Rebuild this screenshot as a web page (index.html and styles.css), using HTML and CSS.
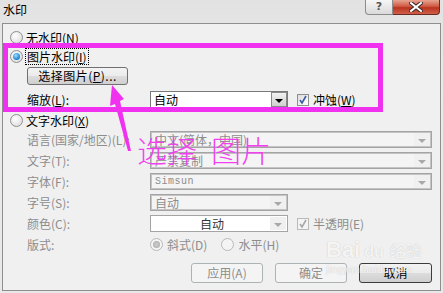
FILE: index.html
```html
<!DOCTYPE html>
<html lang="zh-CN">
<head>
    <meta charset="UTF-8">
    <title>水印</title>
    <link rel="stylesheet" href="styles.css">
</head>
<body>
    <div class="window">
        <div class="titlebar">
            <span class="title">水印</span>
            <div class="caption-btns">
                <div class="cap-help">?</div>
                <div class="cap-close">
                    <svg width="14" height="10" viewBox="0 0 14 10">
                        <path d="M2 1 L12 9 M12 1 L2 9" stroke="#3a2a28" stroke-width="4" stroke-linecap="square"/>
                        <path d="M2 1 L12 9 M12 1 L2 9" stroke="#ffffff" stroke-width="2" stroke-linecap="square"/>
                    </svg>
                </div>
            </div>
        </div>

        <div class="client">
            <div class="radio-row first">
                <span class="radio"></span>
                <span>无水印(<u>N</u>)</span>
            </div>
            <div class="radio-row">
                <span class="radio checked"></span>
                <span class="focus">图片水印(<u>I</u>)</span>
            </div>

            <div class="group">
                <button class="btn pick">选择图片(<u>P</u>)...</button>
                <div class="field-row scale-row">
                    <span class="label">缩放(<u>L</u>):</span>
                    <div class="combo short">
                        <span class="value">自动</span>
                        <span class="drop"><i class="tri"></i></span>
                    </div>
                    <span class="check">
                        <span class="box">
                            <svg width="10" height="10" viewBox="0 0 10 10"><path d="M2 5 L4 8 L8 1" stroke="#3b5aa5" stroke-width="1.6" fill="none"/></svg>
                        </span>
                        <span>冲蚀(<u>W</u>)</span>
                    </span>
                </div>
            </div>

            <div class="radio-row text-radio">
                <span class="radio"></span>
                <span>文字水印(<u>X</u>)</span>
            </div>

            <div class="group text-group">
                <div class="field-row">
                    <span class="label">语言(国家/地区)(L):</span>
                    <div class="combo full off">
                        <span class="value">中文(简体，中国)</span>
                        <span class="drop"><i class="tri"></i></span>
                    </div>
                </div>
                <div class="field-row">
                    <span class="label">文字(T):</span>
                    <div class="combo full off">
                        <span class="value">严禁复制</span>
                        <span class="drop"><i class="tri"></i></span>
                    </div>
                </div>
                <div class="field-row">
                    <span class="label">字体(F):</span>
                    <div class="combo full off">
                        <span class="value mono">Simsun</span>
                        <span class="drop"><i class="tri"></i></span>
                    </div>
                </div>
                <div class="field-row">
                    <span class="label">字号(S):</span>
                    <div class="combo short off">
                        <span class="value">自动</span>
                        <span class="drop"><i class="tri"></i></span>
                    </div>
                </div>
                <div class="field-row">
                    <span class="label">颜色(C):</span>
                    <div class="combo short off color">
                        <span class="value center">自动</span>
                        <span class="drop"><i class="tri"></i></span>
                    </div>
                    <span class="check off">
                        <span class="box">
                            <svg width="10" height="10" viewBox="0 0 10 10"><path d="M2 5 L4 8 L8 1" stroke="#a8a8a8" stroke-width="1.6" fill="none"/></svg>
                        </span>
                        <span>半透明(E)</span>
                    </span>
                </div>
                <div class="field-row">
                    <span class="label">版式:</span>
                    <div class="layout-opts">
                        <span class="opt"><span class="radio off checked"></span>斜式(D)</span>
                        <span class="opt"><span class="radio off"></span>水平(H)</span>
                    </div>
                </div>
            </div>

            <div class="actions">
                <button class="btn off">应用(A)</button>
                <button class="btn off">确定</button>
                <button class="btn default">取消</button>
            </div>
        </div>

        <!-- annotation drawn over the dialog -->
        <div class="mark-box"></div>
        <svg class="mark-arrow" width="443" height="293" viewBox="0 0 443 293">
            <polygon points="112,85 124,99 120,101 131,151 128,151 115,104 110,106" fill="#f032f0"/>
        </svg>
        <div class="mark-text">选择<span class="gap">图片</span></div>

        <div class="watermark">
            <span class="wm-bai">Bai</span><span class="wm-du">du</span><span class="wm-jy">经验</span>
            <span class="wm-url">jingyan.baidu.com</span>
        </div>
    </div>
</body>
</html>
```

FILE: styles.css
```css
body {
    margin: 0;
    background-color: #e8e8e8;
}
.window {
    position: relative;
    width: 443px;
    height: 293px;
    overflow: hidden;
    background: linear-gradient(#e2e2e2, #ebebeb 30%, #e8e8e8);
    font-family: "Noto Sans CJK SC", "Liberation Sans", sans-serif;
    font-size: 12px;
    color: #000;
}
u {
    text-decoration: underline;
    text-underline-offset: 1px;
}
.titlebar {
    height: 23px;
    display: flex;
    justify-content: space-between;
    align-items: flex-start;
}
.title {
    padding: 2px 0 0 3px;
    line-height: 16px;
}
.caption-btns {
    display: flex;
    margin-right: 3px;
}
.cap-help {
    box-sizing: border-box;
    width: 28px;
    height: 15px;
    border: 1px solid #8c8c8c;
    border-top: none;
    border-radius: 0 0 0 4px;
    background: linear-gradient(#f6f6f6, #dadada);
    color: #555;
    font-family: "DejaVu Sans", sans-serif;
    font-size: 11px;
    font-weight: bold;
    line-height: 13px;
    text-align: center;
}
.cap-close {
    box-sizing: border-box;
    width: 47px;
    height: 15px;
    border: 1px solid #6b2a22;
    border-top: none;
    border-left: none;
    border-radius: 0 0 4px 0;
    background: linear-gradient(#e7a493, #cf5b44 45%, #b9341f 55%, #d0604a);
    display: flex;
    justify-content: center;
    align-items: center;
}
.client {
    margin: 0 2px;
    height: 266px;
    border: 1px solid #8e8e8e;
    background-color: #f0f0f0;
}
.radio-row {
    height: 19px;
    display: flex;
    align-items: center;
    gap: 3px;
    padding-left: 7px;
}
.radio-row.first {
    margin-top: 4px;
}
.radio-row.text-radio {
    margin-top: 3px;
}
.radio {
    box-sizing: border-box;
    width: 13px;
    height: 13px;
    border-radius: 50%;
    border: 1px solid #8f8f8f;
    background: radial-gradient(circle at 40% 35%, #ffffff, #d6d6d6);
    display: flex;
    justify-content: center;
    align-items: center;
}
.radio.checked::after {
    content: "";
    width: 7px;
    height: 7px;
    border-radius: 50%;
    background: radial-gradient(circle at 40% 35%, #9fe0ff, #2a8ad8 60%, #165a9c);
}
.radio.off {
    border-color: #b9b9b9;
    background: #f4f4f4;
}
.radio.off.checked::after {
    background: radial-gradient(circle, #cfcfcf, #a6a6a6);
}
.focus {
    outline: 1px dotted #000;
    padding: 0 1px;
    line-height: 15px;
}
.group {
    padding-left: 24px;
}
.btn {
    box-sizing: border-box;
    height: 20px;
    width: 72px;
    padding: 0;
    border: 1px solid #707070;
    border-radius: 3px;
    background: linear-gradient(#f3f3f3, #ebebeb 50%, #dddddd 50%, #cfcfcf);
    font-family: inherit;
    font-size: 12px;
    color: #000;
    line-height: 16px;
}
.btn.pick {
    display: block;
    margin-top: 1px;
    width: 101px;
    height: 18px;
    letter-spacing: 0.5px;
}
.btn.off {
    border-color: #adb2b5;
    background: #f4f4f4;
    color: #8d8d8d;
}
.btn.default {
    border-color: #3c3c3c;
    width: 73px;
}
.field-row {
    height: 17px;
    display: flex;
    align-items: center;
}
.scale-row {
    margin-top: 6px;
}
.label {
    width: 123px;
    white-space: nowrap;
}
.combo {
    box-sizing: border-box;
    height: 17px;
    display: flex;
    border: 1px solid #7a7a7a;
    background-color: #fff;
}
.combo.full {
    width: 282px;
}
.combo.short {
    width: 138px;
}
.combo .value {
    flex: 1;
    padding-left: 3px;
    line-height: 15px;
    white-space: nowrap;
}
.combo .value.center {
    text-align: center;
}
.combo .value.mono {
    font-family: "Liberation Mono", monospace;
    font-size: 10px;
    letter-spacing: 0.5px;
}
.drop {
    box-sizing: border-box;
    width: 16px;
    margin: 0 0 0 1px;
    border: 1px solid #8a8a8a;
    background: linear-gradient(#f2f2f2, #e0e0e0 50%, #d0d0d0);
    display: flex;
    justify-content: center;
    align-items: center;
}
.tri {
    width: 0;
    height: 0;
    margin-top: 3px;
    border-left: 4px solid transparent;
    border-right: 4px solid transparent;
    border-top: 4px solid #000;
}
.combo.off {
    border: 1px solid #a4a4a4;
    box-shadow: inset 0 0 0 1px #c4c4c4;
    background-color: #f0f0f0;
    color: #8d8d8d;
}
.combo.off .value {
    margin: 1px 0 1px 1px;
    line-height: 13px;
    background-color: #f4f4f4;
}
.combo.off.color {
    box-shadow: none;
    background-color: #fff;
}
.combo.off.color .value {
    margin: 0;
    background-color: #fff;
    line-height: 15px;
    color: #333;
}
.combo.off .drop {
    border: none;
    margin: 1px 1px 1px 0;
    background: #f0f0f0;
}
.combo.off .tri {
    border-top-color: #a8a8a8;
}
.text-group {
    margin-top: 1px;
    display: flex;
    flex-direction: column;
    gap: 4px;
}
.text-group .label {
    color: #8d8d8d;
}
.check {
    margin-left: 9px;
    display: flex;
    align-items: center;
    gap: 4px;
}
.check .box {
    box-sizing: border-box;
    width: 12px;
    height: 12px;
    border: 1px solid #8e8f8f;
    background: linear-gradient(135deg, #dcdcdc, #ffffff);
    display: flex;
    justify-content: center;
    align-items: center;
}
.check.off {
    color: #8d8d8d;
}
.check.off .box {
    border-color: #b9b9b9;
    background: #f4f4f4;
}
.layout-opts {
    display: flex;
    gap: 14px;
    color: #8d8d8d;
}
.opt {
    display: flex;
    align-items: center;
    gap: 4px;
}
.actions {
    margin-top: 10px;
    padding-right: 8px;
    display: flex;
    justify-content: flex-end;
    gap: 12px;
}
.mark-box {
    position: absolute;
    left: 3px;
    top: 43px;
    width: 380px;
    height: 69px;
    box-sizing: border-box;
    border: 5px solid #f032f0;
}
.mark-arrow {
    position: absolute;
    left: 0;
    top: 0;
}
.mark-text {
    position: absolute;
    left: 137px;
    top: 133px;
    font-size: 30px;
    font-weight: 200;
    line-height: 32px;
    color: #f040f0;
    white-space: nowrap;
}
.mark-text .gap {
    margin-left: 14px;
}
.watermark {
    position: absolute;
    left: 326px;
    top: 238px;
    width: 110px;
    color: rgba(255, 255, 255, 0.85);
    text-shadow: 0 0 1px #b8b8b8;
    font-family: "Liberation Sans", sans-serif;
}
.wm-bai, .wm-du {
    font-size: 22px;
    font-weight: bold;
    line-height: 24px;
}
.wm-du {
    margin-left: 4px;
    font-size: 16px;
}
.wm-jy {
    margin-left: 6px;
    font-family: "Noto Sans CJK SC", sans-serif;
    font-size: 16px;
}
.wm-url {
    display: block;
    font-size: 10px;
    line-height: 12px;
    letter-spacing: 0.3px;
}
```
